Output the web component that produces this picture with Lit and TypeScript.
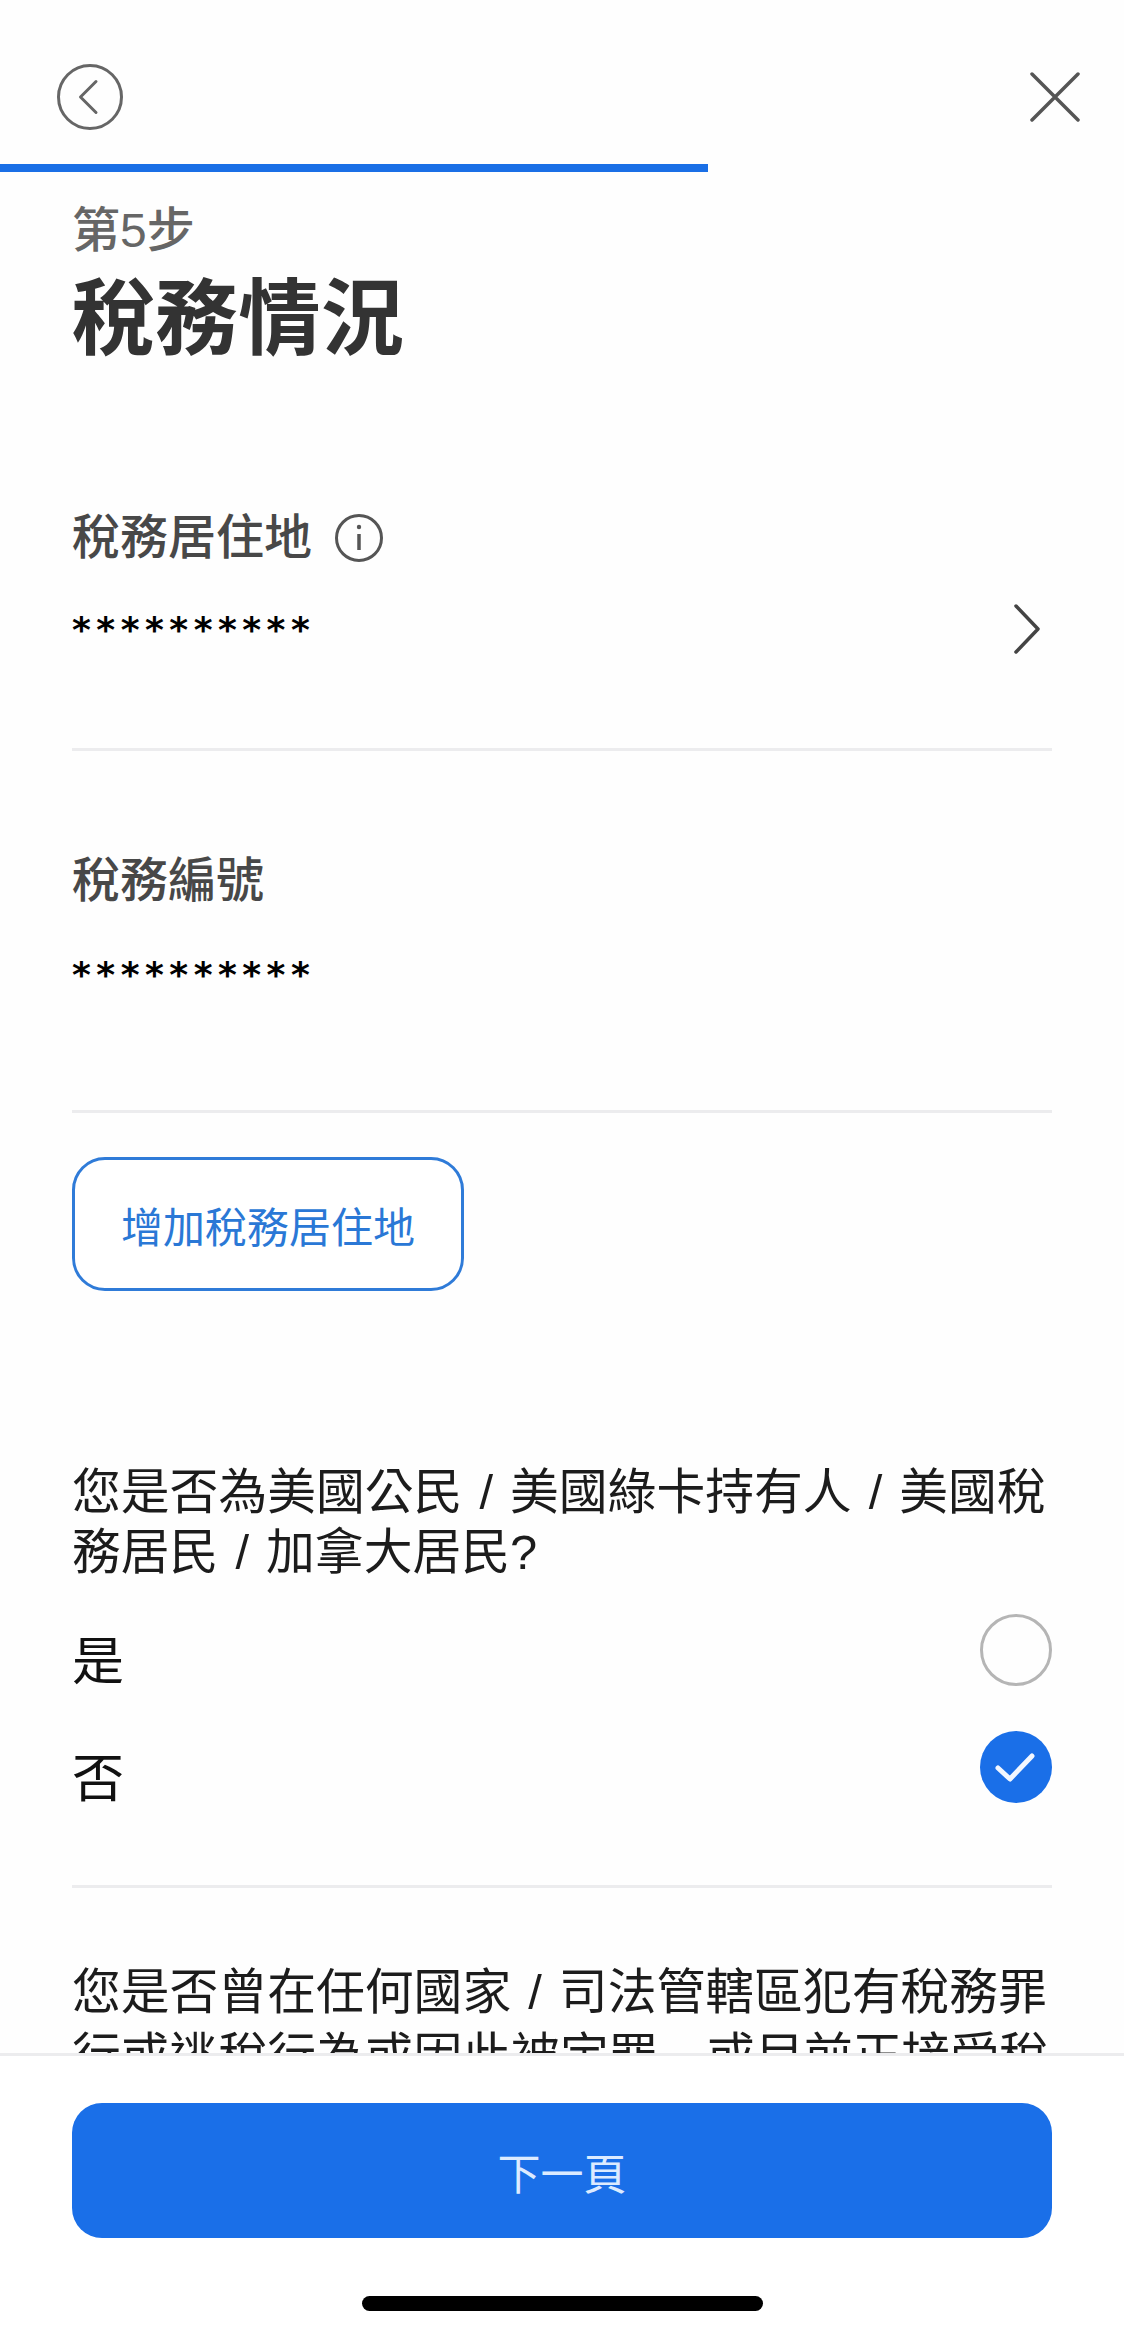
import { LitElement, html, css } from "lit";
import { customElement } from "lit/decorators.js";

@customElement("app-root")
export class AppRoot extends LitElement {
  static styles = css`
    :host { display: flex; flex-direction: column; width: 1124px; height: 2335px; overflow: hidden; background: #fefefe;
      font-family: "Liberation Sans", "Noto Sans CJK TC", sans-serif; color: #222; }
    * { box-sizing: border-box; }
    svg { display: block; flex: none; }
    .top { height: 164px; flex: none; padding: 63px 44px 0 57px; display: flex; justify-content: space-between; align-items: flex-start; }
    .close { margin-top: 9px; }
    .bar { flex: none; height: 8px; width: 708px; background: #1a6fe6; }
    .main { flex: 1; min-height: 0; overflow: hidden; padding: 0 72px; }
    .step { margin-top: 31px; font-size: 48px; line-height: 56px; font-weight: 500; color: #666; }
    h1 { margin: 13px 0 0; font-size: 83px; line-height: 96px; font-weight: 600; color: #333; }
    .label { display: flex; align-items: center; gap: 23px; font-size: 48px; line-height: 60px; font-weight: 500; color: #484848; }
    .first { margin-top: 140px; }
    .second { margin-top: 100px; }
    .value { display: flex; justify-content: space-between; align-items: center; height: 60px; margin-top: 34px; font-family: "DejaVu Sans", sans-serif; font-size: 36px; font-weight: 700; letter-spacing: 5.5px; line-height: 60px; color: #000; padding-right: 12px; }
    .second + .value { margin-top: 36px; }
    .stars { display: block; margin-top: -4px; }
    .chev { margin-top: -6px; }
    hr { border: none; height: 3px; margin: 0; background: #ececee; }
    .rule1 { margin-top: 86px; }
    .rule2 { margin-top: 103px; }
    .add { display: flex; align-items: center; justify-content: center; width: 392px; height: 134px; margin-top: 44px; border: 3.5px solid #2f7bd8; border-radius: 33px; background: #fff; color: #2a78d6; font: inherit; font-size: 42px; padding: 0; }
    .q { margin: 0; font-size: 48.8px; line-height: 60px; word-spacing: 3.5px; color: #1c1c1c; }
    .q1 { margin-top: 171px; }
    .q2 { margin-top: 74px; }
    .comma { font-family: "Noto Sans CJK SC", sans-serif; }
    .opt { display: flex; justify-content: space-between; align-items: center; height: 72px; font-size: 52px; color: #111; }
    .opt span { display: block; padding-top: 15px; }
    .opts { margin-top: 32px; display: flex; flex-direction: column; gap: 45px; }
    .radio { width: 72px; height: 72px; border-radius: 50%; border: 3.5px solid #b5b5b5; }
    .rule3 { margin-top: 82px; }
    .foot { flex: none; height: 282px; border-top: 3px solid #ececee; background: #fff; padding: 47px 72px 0; display: flex; flex-direction: column; align-items: center; }
    .next { width: 100%; height: 135px; border: none; border-radius: 30px; background: #1a6fe8; color: #dcebff; font: inherit; font-size: 43px; padding: 0; }
    .home { width: 401px; height: 15px; margin-top: 58px; border-radius: 8px; background: #000; }
  `;

  render() {
    return html`
      <div class="top">
        <svg width="66" height="68" viewBox="0 0 66 68" fill="none" stroke="#666" stroke-width="3"><circle cx="33" cy="34" r="31.5"/><path d="M39 18.5 23.5 34 39 49.5" stroke-linecap="round" stroke-linejoin="round"/></svg>
        <svg class="close" width="50" height="50" viewBox="0 0 50 50" fill="none" stroke="#555" stroke-width="3.5" stroke-linecap="round"><path d="M2 2 48 48M48 2 2 48"/></svg>
      </div>
      <div class="bar"></div>
      <div class="main">
        <div class="step">第5步</div>
        <h1>稅務情況</h1>
        <div class="label first">稅務居住地
          <svg width="48" height="48" viewBox="0 0 48 48" fill="none" stroke="#555" stroke-width="3"><circle cx="24" cy="24" r="22.5"/><path d="M24 20v16" stroke-width="3.5"/><circle cx="24" cy="13" r="2.2" fill="#555" stroke="none"/></svg>
        </div>
        <div class="value"><span class="stars">**********</span>
          <svg class="chev" width="26" height="50" viewBox="0 0 26 50" fill="none" stroke="#444" stroke-width="3.5" stroke-linecap="round" stroke-linejoin="round"><path d="M2 2 24 25 2 48"/></svg>
        </div>
        <hr class="rule1" />
        <div class="label second">稅務編號</div>
        <div class="value"><span class="stars">**********</span></div>
        <hr class="rule2" />
        <button class="add">增加稅務居住地</button>
        <p class="q q1">您是否為美國公民 / 美國綠卡持有人 / 美國稅務居民 / 加拿大居民?</p>
        <div class="opts">
          <div class="opt"><span>是</span><div class="radio"></div></div>
          <div class="opt"><span>否</span>
            <svg width="72" height="72" viewBox="0 0 72 72"><circle cx="36" cy="36" r="36" fill="#1a6fe8"/><path d="M18 37 30 48 52 25" fill="none" stroke="#f2f7ff" stroke-width="5" stroke-linecap="round" stroke-linejoin="round"/></svg>
          </div>
        </div>
        <hr class="rule3" />
        <p class="q q2">您是否曾在任何國家 / 司法管轄區犯有稅務罪行或逃稅行為或因此被定罪<span class="comma">，</span>或目前正接受稅務調查?</p>
      </div>
      <div class="foot">
        <button class="next">下一頁</button>
        <div class="home"></div>
      </div>
    `;
  }
}
